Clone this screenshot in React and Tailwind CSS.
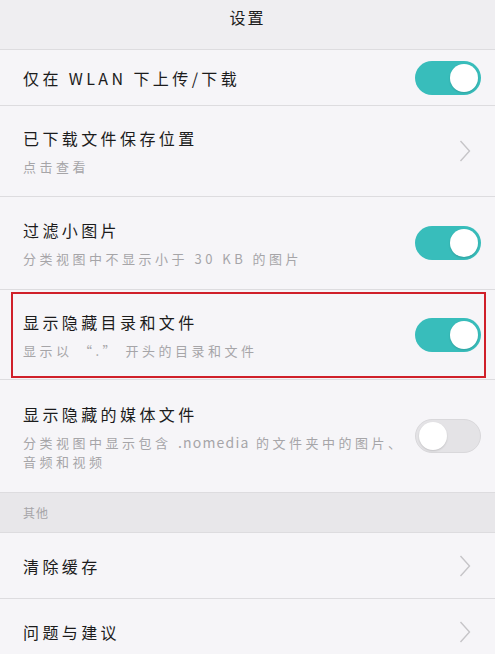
import React from 'react';

const font = { fontFamily: '"Noto Sans CJK SC", "Noto Sans", sans-serif' };

const Toggle = ({ on }) => (
    <div className={`w-[66px] h-[34px] rounded-full flex items-center px-[3px] shrink-0 ${on ? 'bg-[#38bdbb] justify-end' : 'bg-[#e4e3e6] border border-[#d9d8db] justify-start'}`}>
        <div className="w-[28px] h-[28px] rounded-full bg-white shadow-[0_1px_2px_rgba(0,0,0,0.15)]" />
    </div>
);

const Chevron = () => (
    <svg width="12" height="24" viewBox="0 0 12 24" className="shrink-0 mr-[10px]">
        <path d="M1.5 2 L10.5 12 L1.5 22" fill="none" stroke="#c6c5c8" strokeWidth="1.4" />
    </svg>
);

const Row = ({ title, sub, right, h }) => (
    <div className={`flex items-center justify-between pl-[23px] pr-[14px] border-b border-[#dddcdf] ${h}`}>
        <div className="flex flex-col gap-[7px] min-w-0">
            <span className="text-[16px] tracking-[3.4px] text-[#1c1c1c] whitespace-nowrap">{title}</span>
            {sub && <span className="text-[13px] tracking-[3.5px] leading-[19px] text-[#a6a5a8] whitespace-nowrap">{sub}</span>}
        </div>
        {right}
    </div>
);

export default function App() {
    return (
        <div className="w-[495px] h-[654px] overflow-hidden bg-[#f6f5f8]" style={font}>
            <div className="h-[50px] bg-[#efeef1] border-b border-[#dddcdf] flex items-start justify-center pt-[5px]">
                <span className="text-[16px] tracking-[2px] text-[#1c1c1c]">设置</span>
            </div>
            <Row h="h-[56px]" title="仅在 WLAN 下上传/下载" right={<Toggle on />} />
            <Row h="h-[91px]" title="已下载文件保存位置" sub="点击查看" right={<Chevron />} />
            <Row h="h-[93px]" title="过滤小图片" sub="分类视图中不显示小于 30 KB 的图片" right={<Toggle on />} />
            <div className="h-[90px] border-b border-[#dddcdf] pt-[2px] pl-[11px] pr-[9px]">
                <div className="h-[86px] border-2 border-[#d0202a] flex items-center justify-between pl-[10px] pr-[3px]">
                    <div className="flex flex-col gap-[7px]">
                        <span className="text-[16px] tracking-[3.4px] text-[#1c1c1c]">显示隐藏目录和文件</span>
                        <span className="text-[13px] tracking-[3.5px] text-[#a6a5a8]">显示以 “.” 开头的目录和文件</span>
                    </div>
                    <Toggle on />
                </div>
            </div>
            <Row
                h="h-[113px]"
                title="显示隐藏的媒体文件"
                sub={<>分类视图中显示包含 <span className="text-[14px] tracking-[1.2px]">.nomedia</span> 的文件夹中的图片、<br />音频和视频</>}
                right={<Toggle />}
            />
            <div className="h-[40px] bg-[#e8e7ea] border-b border-[#dddcdf] flex items-center pl-[23px]">
                <span className="text-[12px] tracking-[1px] text-[#a6a5a8]">其他</span>
            </div>
            <Row h="h-[66px]" title="清除缓存" right={<Chevron />} />
            <Row h="h-[66px]" title="问题与建议" right={<Chevron />} />
        </div>
    );
}
